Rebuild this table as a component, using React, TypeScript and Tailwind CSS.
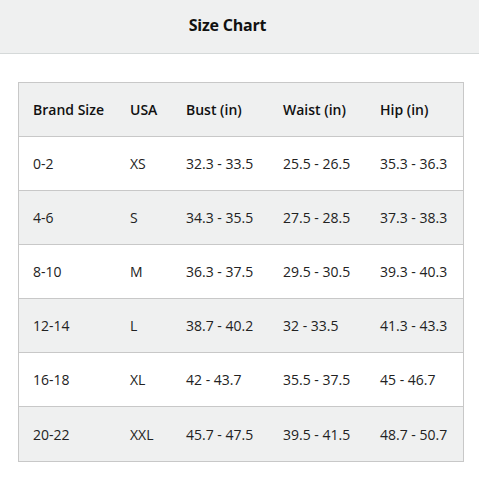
const headers = ['Brand Size', 'USA', 'Bust (in)', 'Waist (in)', 'Hip (in)'];

const rows = [
  ['0-2', 'XS', '32.3 - 33.5', '25.5 - 26.5', '35.3 - 36.3'],
  ['4-6', 'S', '34.3 - 35.5', '27.5 - 28.5', '37.3 - 38.3'],
  ['8-10', 'M', '36.3 - 37.5', '29.5 - 30.5', '39.3 - 40.3'],
  ['12-14', 'L', '38.7 - 40.2', '32 - 33.5', '41.3 - 43.3'],
  ['16-18', 'XL', '42 - 43.7', '35.5 - 37.5', '45 - 46.7'],
  ['20-22', 'XXL', '45.7 - 47.5', '39.5 - 41.5', '48.7 - 50.7'],
];

const cols = ['w-[97px]', 'w-[56px]', 'w-[97px]', 'w-[97px]', 'w-[97px]'];

export default function App() {
  return (
    <div className="w-[479px] h-[484px] bg-white text-[#111] font-['Open_Sans','Noto_Sans',sans-serif]">
      {/* Header */}
      <div className="h-[54px] bg-[#eff0f0] border-b border-[#d5d9d9] flex items-center justify-center pr-[24px] pb-[3px]">
        <h1 className="text-[16px] font-bold tracking-[-0.2px]">Size Chart</h1>
      </div>

      <div className="pt-[28px] px-[18px]">
        <div className="w-[446px] border border-[#c8c8c8]">
          <div className="flex h-[54px] items-center bg-[#eff0f0] border-b border-[#c8c8c8] text-[14px] font-semibold">
            {headers.map((h, i) => (
              <div key={h} className={`${cols[i]} pl-[14px] shrink-0 whitespace-nowrap`}>
                {h}
              </div>
            ))}
          </div>
          {rows.map((r, ri) => (
            <div
              key={r[0]}
              className={`flex h-[54px] items-center text-[14px] text-[#222] ${ri % 2 === 1 ? 'bg-[#eff0f0]' : 'bg-white'} ${ri < rows.length - 1 ? 'border-b border-[#c8c8c8]' : ''}`}
            >
              {r.map((c, ci) => (
                <div key={ci} className={`${cols[ci]} pl-[14px] shrink-0 whitespace-nowrap`}>
                  {c}
                </div>
              ))}
            </div>
          ))}
        </div>
      </div>
    </div>
  );
}
